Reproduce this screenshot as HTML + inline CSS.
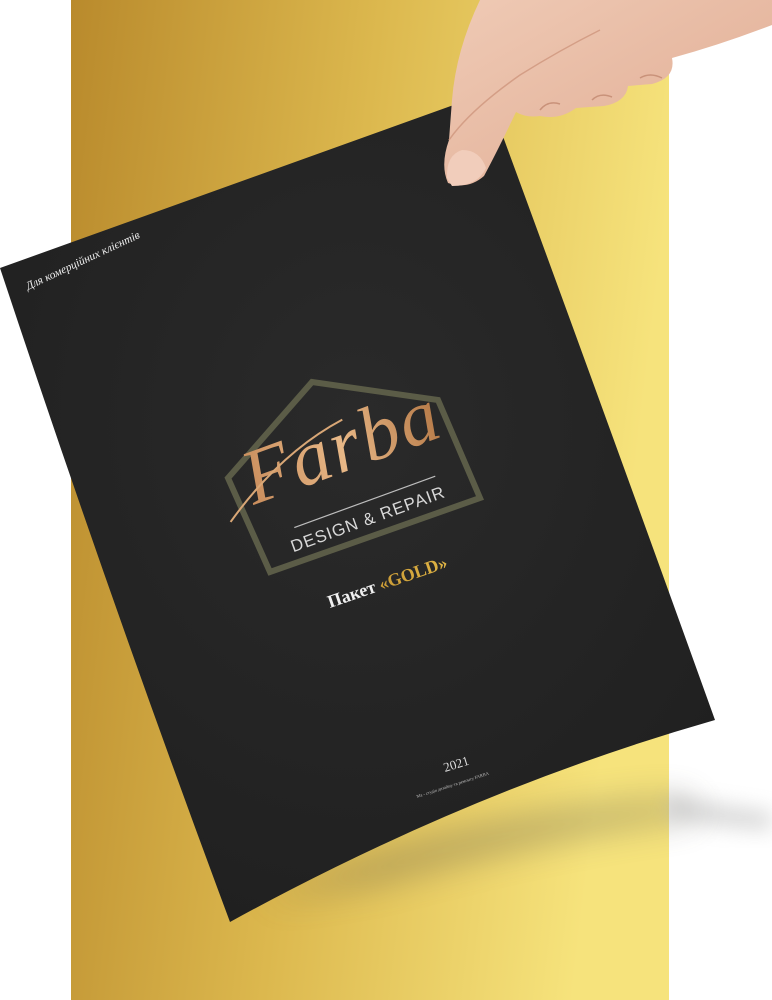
<!DOCTYPE html>
<html><head><meta charset="utf-8"><style>
html,body{margin:0;padding:0;background:#fff;width:772px;height:1000px;overflow:hidden}
svg{display:block}
</style></head><body>
<svg width="772" height="1000" viewBox="0 0 772 1000" xmlns="http://www.w3.org/2000/svg">
<defs>
<linearGradient id="gold" x1="0" y1="0" x2="1" y2="0.2">
<stop offset="0" stop-color="#b98a2c"/><stop offset="0.5" stop-color="#dcb84e"/><stop offset="1" stop-color="#f6e37c"/>
</linearGradient>
<linearGradient id="fg" x1="0" y1="0" x2="1" y2="0">
<stop offset="0" stop-color="#c98d5c"/><stop offset="0.5" stop-color="#e8b887"/><stop offset="1" stop-color="#b67a48"/>
</linearGradient>
<linearGradient id="gt" x1="0" y1="0" x2="1" y2="0">
<stop offset="0" stop-color="#b8862a"/><stop offset="1" stop-color="#e0b545"/>
</linearGradient>
<radialGradient id="paper" cx="0.5" cy="0.4" r="0.7">
<stop offset="0" stop-color="#2a2a2a"/><stop offset="1" stop-color="#1f1f1f"/>
</radialGradient>
<linearGradient id="skin" x1="0" y1="0" x2="1" y2="1">
<stop offset="0" stop-color="#efcab5"/><stop offset="1" stop-color="#e0ab92"/>
</linearGradient>
<filter id="blur" x="-50%" y="-50%" width="200%" height="200%"><feGaussianBlur stdDeviation="18"/></filter>
<filter id="blur2" x="-50%" y="-50%" width="200%" height="200%"><feGaussianBlur stdDeviation="10"/></filter>
</defs>
<rect x="71" y="0" width="598" height="1000" fill="url(#gold)"/>
<!-- shadows -->
<path d="M260 900 Q480 810 680 800 L700 815 Q560 830 380 880 Z" fill="#5a5448" opacity="0.45" filter="url(#blur)"/>
<path d="M669 795 Q720 805 772 812 L772 830 Q720 828 669 818 Z" fill="#aaa" opacity="0.45" filter="url(#blur2)"/>
<!-- paper -->
<path d="M0 268 L487 93 Q600 400 715 720 Q470 790 230 922 Q110 600 0 268 Z" fill="url(#paper)"/>
<!-- hand -->
<path d="M480 0 L772 0 L772 25 Q720 45 672 58 Q676 78 652 84 L628 86 Q626 102 604 106 L576 108 Q560 120 540 116 Q526 118 516 112 Q498 150 484 176 Q468 190 448 183 Q440 165 449 140 L452 100 Q456 50 480 0 Z" fill="url(#skin)"/>
<path d="M449 140 Q470 110 520 75 Q560 50 600 30" stroke="#d49e86" stroke-width="1.5" fill="none"/>
<path d="M447 178 Q446 155 462 150 Q480 150 486 168 Q478 186 452 186 Z" fill="#f1cdbb"/>
<path d="M592 100 Q600 92 612 97" stroke="#c9927a" stroke-width="1.5" fill="none"/>
<path d="M640 78 Q650 72 662 78" stroke="#c9927a" stroke-width="1.5" fill="none"/>
<path d="M540 110 Q548 100 560 104" stroke="#c9927a" stroke-width="1.5" fill="none"/>
<!-- top text -->
<text transform="translate(28,290) rotate(-25)" font-family="Liberation Serif,serif" font-style="italic" font-size="11.5" fill="#eee">Для комерційних клієнтів</text>
<!-- house -->
<polygon points="270,572 228,478 312,382 438,400 480,498" fill="none" stroke="#5b5c47" stroke-width="6" stroke-linejoin="miter"/>
<g transform="translate(350,470) rotate(-20)">
<text x="0" y="0" text-anchor="middle" font-family="Liberation Serif,serif" font-style="italic" font-size="78" fill="url(#fg)" letter-spacing="2">Farba</text>
<path d="M-130 8 Q-60 -40 10 -50" stroke="#d9a776" stroke-width="2" fill="none"/>
<line x1="-72" y1="35" x2="78" y2="35" stroke="#bdbdbd" stroke-width="1.2"/>
<text x="0" y="58" text-anchor="middle" font-family="Liberation Sans,sans-serif" font-size="17" fill="#d8d8d8" letter-spacing="1">DESIGN &amp; REPAIR</text>
</g>
<text transform="translate(330,608) rotate(-19)" font-family="Liberation Serif,serif" font-weight="bold" font-size="18" fill="#f0f0f0">Пакет <tspan fill="url(#gt)">«GOLD»</tspan></text>
<text transform="translate(445,772) rotate(-17)" font-family="Liberation Serif,serif" font-size="13" fill="#ddd">2021</text>
<text transform="translate(417,798) rotate(-18)" font-family="Liberation Serif,serif" font-size="4.5" fill="#bbb">Ма - студія дизайну та ремонту FARBA</text>
</svg>
</body></html>
